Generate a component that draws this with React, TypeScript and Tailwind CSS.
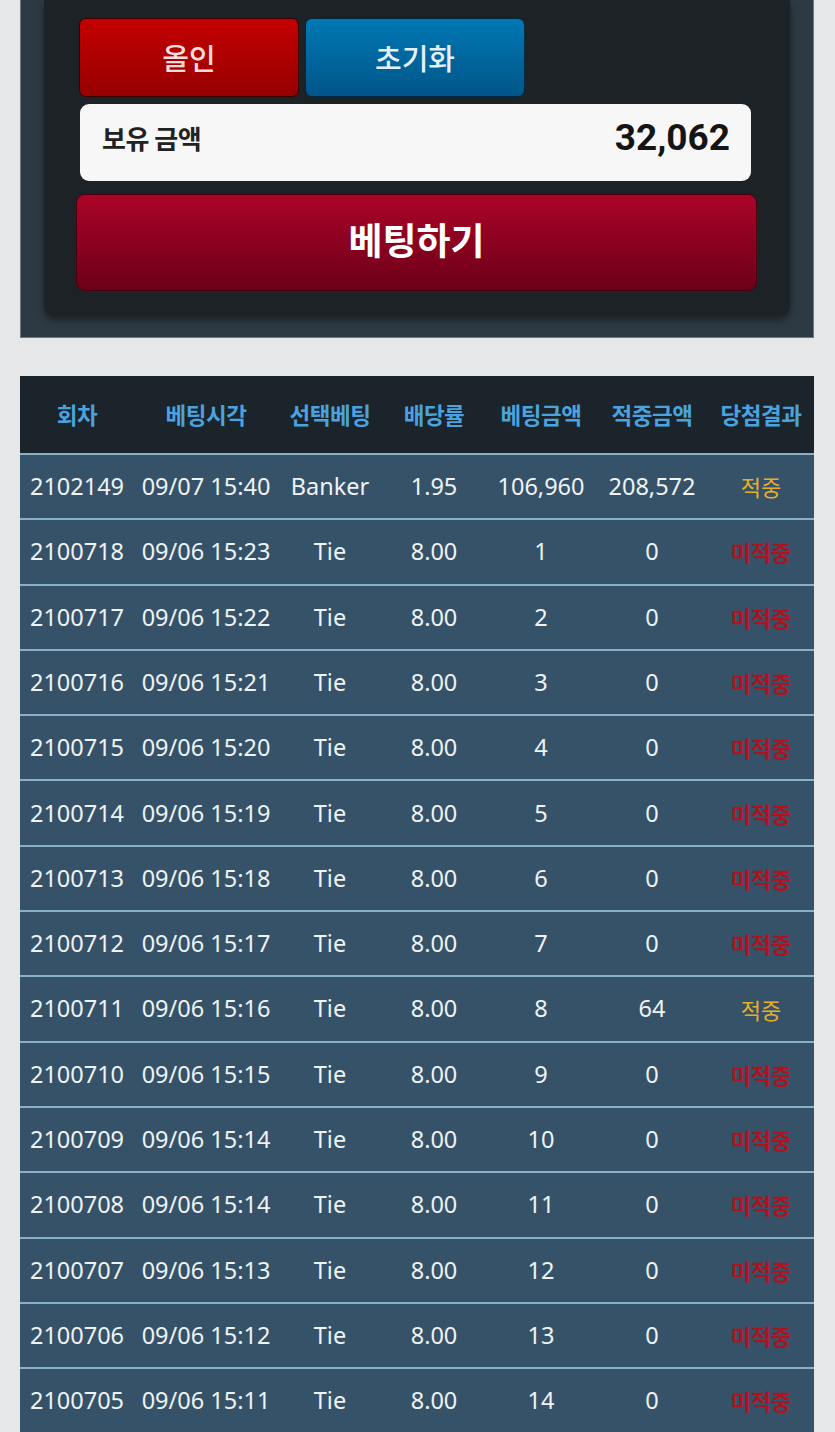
const ROWS: [string, string, string, string, string, string, boolean][] = [
  ["2102149", "09/07 15:40", "Banker", "1.95", "106,960", "208,572", true],
  ["2100718", "09/06 15:23", "Tie", "8.00", "1", "0", false],
  ["2100717", "09/06 15:22", "Tie", "8.00", "2", "0", false],
  ["2100716", "09/06 15:21", "Tie", "8.00", "3", "0", false],
  ["2100715", "09/06 15:20", "Tie", "8.00", "4", "0", false],
  ["2100714", "09/06 15:19", "Tie", "8.00", "5", "0", false],
  ["2100713", "09/06 15:18", "Tie", "8.00", "6", "0", false],
  ["2100712", "09/06 15:17", "Tie", "8.00", "7", "0", false],
  ["2100711", "09/06 15:16", "Tie", "8.00", "8", "64", true],
  ["2100710", "09/06 15:15", "Tie", "8.00", "9", "0", false],
  ["2100709", "09/06 15:14", "Tie", "8.00", "10", "0", false],
  ["2100708", "09/06 15:14", "Tie", "8.00", "11", "0", false],
  ["2100707", "09/06 15:13", "Tie", "8.00", "12", "0", false],
  ["2100706", "09/06 15:12", "Tie", "8.00", "13", "0", false],
  ["2100705", "09/06 15:11", "Tie", "8.00", "14", "0", false],
];

const HEADERS = ["회차", "베팅시각", "선택베팅", "배당률", "베팅금액", "적중금액", "당첨결과"];

const COLS = "grid grid-cols-[114px_144px_104px_104px_110px_112px_106px]";

export default function App() {
  return (
    <div className="min-h-[1432px] w-[835px] overflow-hidden bg-[#e6e7e8] font-['Noto_Sans','Noto_Sans_CJK_KR',sans-serif]">
      {/* Betting panel */}
      <div className="mx-[20px] w-[794px] border-x border-b border-[#6b7781] bg-[#2e3a43] pb-[21px]">
        <div className="mx-[23px] flex flex-col rounded-b-[10px] bg-[#1d2226] px-[32px] pb-[25px] pt-[18px] shadow-[0_4px_8px_rgba(0,0,0,0.45)]">
          <div className="flex gap-[6px] pl-[3px]">
            <button className="flex h-[79px] w-[220px] items-center justify-center rounded-[7px] border border-[#3a0000] bg-gradient-to-b from-[#c40000] to-[#970000] text-[29px] font-medium text-[#f7dede] font-['Noto_Sans_CJK_KR',sans-serif]">
              올인
            </button>
            <button className="flex h-[79px] w-[220px] items-center justify-center rounded-[7px] border border-[#002840] bg-gradient-to-b from-[#0078b4] to-[#005689] text-[29px] font-medium text-[#e6f0f8] font-['Noto_Sans_CJK_KR',sans-serif]">
              초기화
            </button>
          </div>
          <div className="ml-[4px] mt-[7px] flex h-[77px] w-[671px] items-center justify-between rounded-[9px] bg-[#f7f7f8] pb-[10px] pl-[22px] pr-[21px]">
            <span className="text-[26px] font-bold tracking-[-0.5px] text-[#222] font-['Noto_Sans_CJK_KR',sans-serif]">보유 금액</span>
            <span className="text-[37px] font-bold text-[#151515] font-['Roboto',sans-serif]">32,062</span>
          </div>
          <button className="mt-[13px] flex h-[97px] w-[681px] items-center justify-center rounded-[9px] border border-[#4a0010] bg-gradient-to-b from-[#ab0428] to-[#6c0018] pb-[6px] text-[37px] font-bold text-white font-['Noto_Sans_CJK_KR',sans-serif]">
            베팅하기
          </button>
        </div>
      </div>

      {/* History table */}
      <div className="ml-[20px] mt-[38px] w-[794px]">
        <div className={`${COLS} h-[77px] items-center bg-[#1b232b]`}>
          {HEADERS.map((h) => (
            <div key={h} className="text-center text-[22.5px] font-bold tracking-[-0.5px] text-[#4aa2de] font-['Noto_Sans_CJK_KR',sans-serif]">
              {h}
            </div>
          ))}
        </div>
        {ROWS.map((r) => (
          <div key={r[0]} className={`${COLS} h-[65.3px] items-center border-t-2 border-[#8ab0c9] bg-[#365268] text-[23.5px] text-[#eef3f6]`}>
            <div className="text-center">{r[0]}</div>
            <div className="text-center">{r[1]}</div>
            <div className="text-center">{r[2]}</div>
            <div className="text-center">{r[3]}</div>
            <div className="text-center">{r[4]}</div>
            <div className="text-center">{r[5]}</div>
            {r[6] ? (
              <div className="text-center text-[22px] text-[#e7ae2c] font-['Noto_Sans_CJK_KR',sans-serif]">적중</div>
            ) : (
              <div className="text-center text-[22px] font-bold text-[#ad141f] font-['Noto_Sans_CJK_KR',sans-serif]">미적중</div>
            )}
          </div>
        ))}
      </div>
    </div>
  );
}
